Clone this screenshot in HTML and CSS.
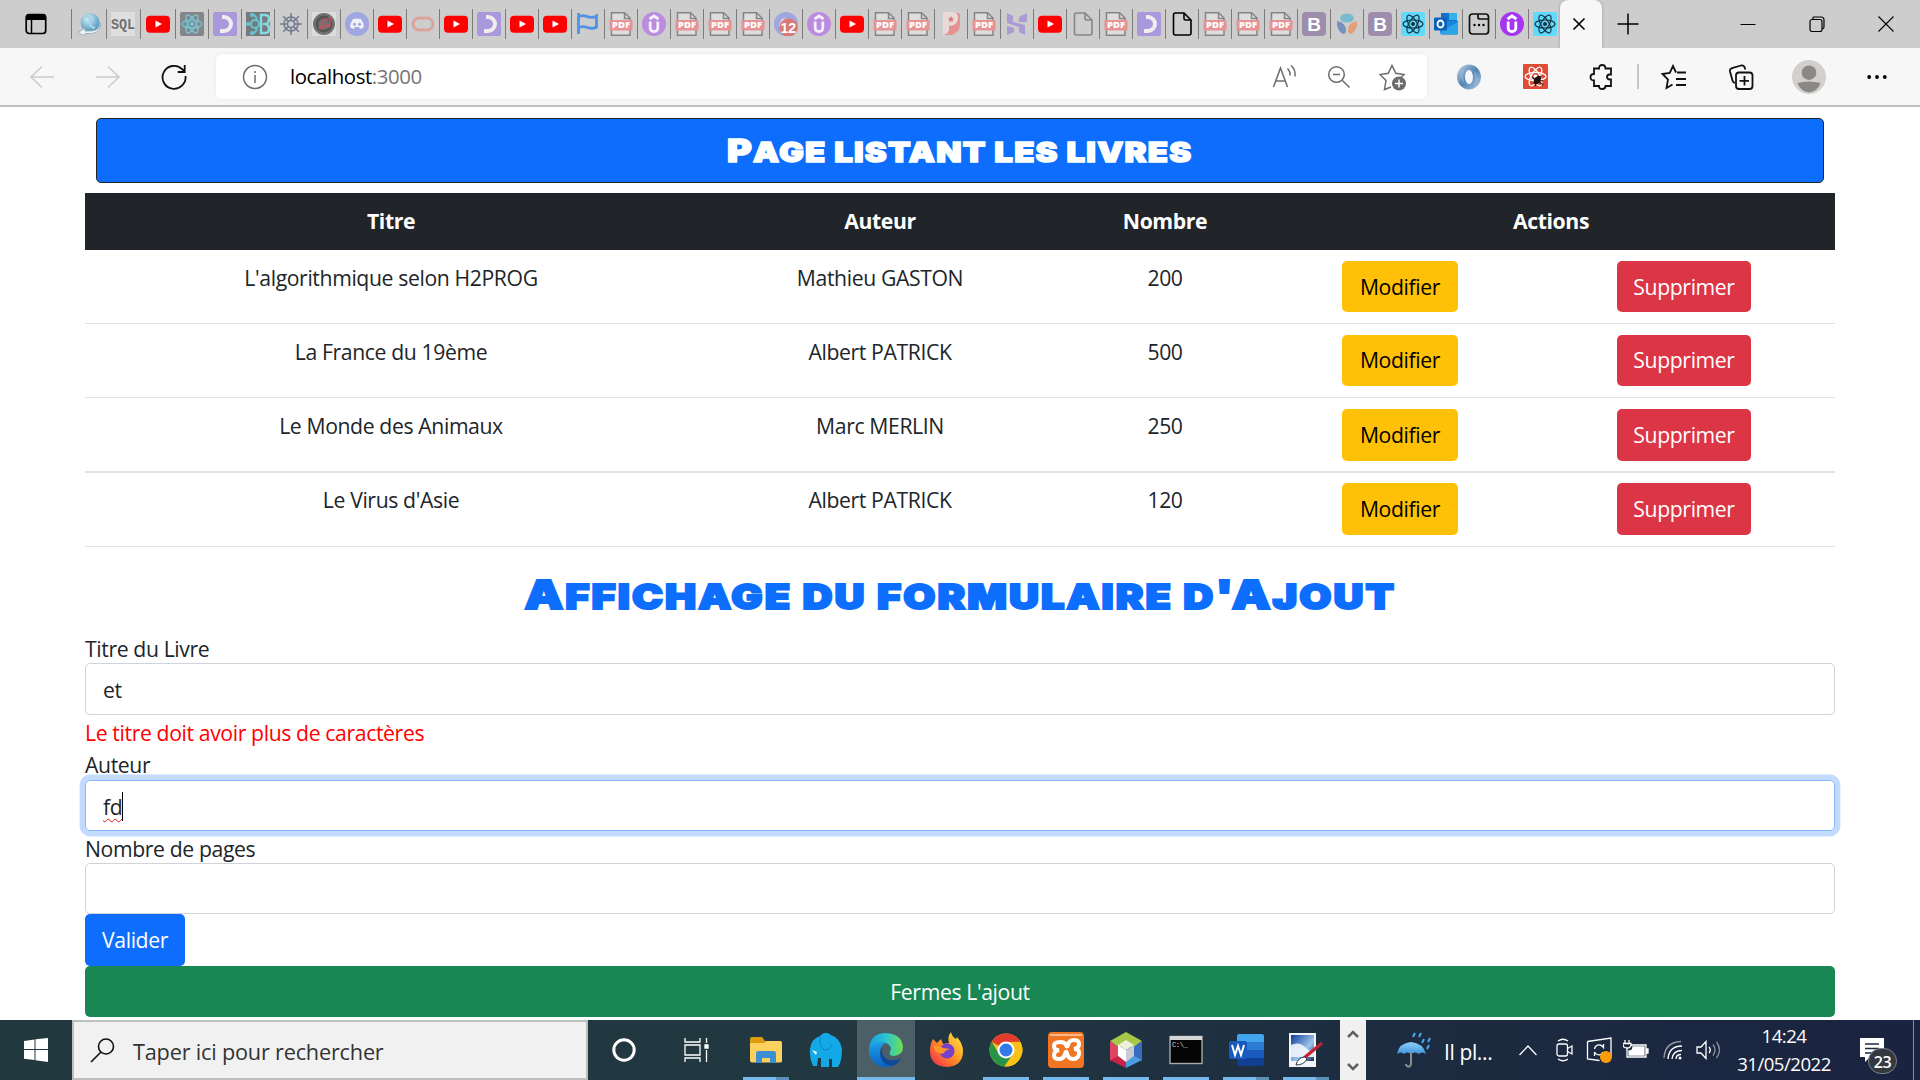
FILE: index.html
```html
<!DOCTYPE html>
<html lang="fr">
<head>
<meta charset="utf-8">
<title>localhost:3000</title>
<link rel="stylesheet" href="styles.css">
</head>
<body>
<svg class="defs" width="0" height="0" aria-hidden="true">
<defs>
<linearGradient id="gEdge" x1="0" y1="0" x2="1" y2="0"><stop offset="0" stop-color="#1b9de2"/><stop offset=".5" stop-color="#2cc4d4"/><stop offset="1" stop-color="#6fe04c"/></linearGradient>
<linearGradient id="gEdge2" x1="0" y1="0" x2="0" y2="1"><stop offset="0" stop-color="#1fa0e6"/><stop offset="1" stop-color="#0b62c4"/></linearGradient>
<linearGradient id="gFox" x1="1" y1="0" x2="0" y2="1"><stop offset="0" stop-color="#fff04a"/><stop offset=".45" stop-color="#ff9a22"/><stop offset="1" stop-color="#f5214f"/></linearGradient>
<linearGradient id="gSky" x1="0" y1="0" x2="1" y2="1"><stop offset="0" stop-color="#0d3f9c"/><stop offset=".6" stop-color="#9fc4ee"/><stop offset="1" stop-color="#1b2e5c"/></linearGradient>
<linearGradient id="gUmb" x1="0" y1="0" x2="0" y2="1"><stop offset="0" stop-color="#8fd0fb"/><stop offset="1" stop-color="#3f94dd"/></linearGradient>
<radialGradient id="gGlobe" cx=".4" cy=".3" r=".7"><stop offset="0" stop-color="#d6eff8"/><stop offset="1" stop-color="#4f94bd"/></radialGradient>
<linearGradient id="gRing" x1="0" y1="0" x2="1" y2="1"><stop offset="0" stop-color="#c3d6e8"/><stop offset=".5" stop-color="#5383b4"/><stop offset="1" stop-color="#b4cbe2"/></linearGradient>
</defs>
<symbol id="atom" viewBox="0 0 24 24"><g fill="none" stroke="currentColor" stroke-width="1.2"><ellipse cx="12" cy="12" rx="10" ry="4"/><ellipse cx="12" cy="12" rx="10" ry="4" transform="rotate(60 12 12)"/><ellipse cx="12" cy="12" rx="10" ry="4" transform="rotate(120 12 12)"/></g><circle cx="12" cy="12" r="2" fill="currentColor"/></symbol>
<symbol id="globe" viewBox="0 0 24 24"><circle cx="13" cy="10.500" r="9.500" fill="url(#gGlobe)"/><path d="M9 4q5 1 4 6t5 6" stroke="#a5d3e6" stroke-width="2.500" fill="none"/><path d="M23.500 11c0 6-5 8-11 8H8v-3l-7 4.500L8 24v-2.500h5c8 0 11-5 10.500-10.500z" fill="#eef3f6" stroke="#8fa8b6" stroke-width=".8"/></symbol>
<symbol id="yt" viewBox="0 0 24 24"><rect x="0" y="3.800" width="24" height="17" rx="4" fill="#f00"/><path d="M9.500 8.500v7l6.500-3.500z" fill="#fff"/></symbol>
<symbol id="react-dim" viewBox="0 0 24 24"><rect width="24" height="24" rx="2" fill="#868686"/><use href="#atom" color="#70cddd"/></symbol>
<symbol id="react" viewBox="0 0 24 24"><rect width="24" height="24" rx="2" fill="#61dafb"/><use href="#atom" color="#143342"/></symbol>
<symbol id="dev" viewBox="0 0 24 24"><rect width="24" height="24" rx="2" fill="#a998db"/><path d="M9 5h2a7 7 0 0 1 0 14H7" fill="none" stroke="#eee" stroke-width="4"/></symbol>
<symbol id="rb" viewBox="0 0 24 24"><rect width="24" height="24" fill="#747b7e"/><path d="M15 3h4q4 0 4 4t-3 5q3 1 3 5t-4 4h-4zM17 12h3" fill="none" stroke="#86d9e5" stroke-width="2.500"/><g fill="none" stroke="#66c5d3" stroke-width="2"><circle cx="9" cy="12" r="4"/><path d="M6 2q6 3 4 6M2 12h4M6 22q6-3 4-6"/></g><circle cx="6" cy="3" r="2" fill="#66c5d3"/><circle cx="2" cy="12" r="2" fill="#66c5d3"/><circle cx="6" cy="21" r="2" fill="#66c5d3"/></symbol>
<symbol id="wheel" viewBox="0 0 24 24"><g fill="none" stroke="#757c91" stroke-width="1.600"><circle cx="12" cy="12" r="7"/><circle cx="12" cy="12" r="3.500"/><path d="M12 1v8M12 15v8M1 12h8M15 12h8M4.200 4.200l5.500 5.500M14.300 14.300l5.500 5.500M19.800 4.200l-5.500 5.500M9.700 14.300l-5.500 5.500"/></g></symbol>
<symbol id="disc" viewBox="0 0 24 24"><rect width="24" height="24" fill="#ddd"/><circle cx="12" cy="12" r="11" fill="#727272"/><circle cx="12" cy="12" r="7" fill="none" stroke="#555" stroke-width="3"/><path d="M11 15V8l7-2v8" fill="none" stroke="#b95560" stroke-width="1.500"/><ellipse cx="9" cy="15.500" rx="2.500" ry="2" fill="#b95560"/><ellipse cx="16" cy="14" rx="2.300" ry="2" fill="#b95560"/></symbol>
<symbol id="discord" viewBox="0 0 24 24"><circle cx="12" cy="12" r="12" fill="#9fa6e0"/><path d="M8 7q4-1 8 0 3 4 3 8-2 2-4 2l-1-2h-4l-1 2q-2 0-4-2 0-4 3-8z" fill="#efeff4"/><circle cx="9.500" cy="12.300" r="1.500" fill="#9fa6e0"/><circle cx="14.500" cy="12.300" r="1.500" fill="#9fa6e0"/></symbol>
<symbol id="oval" viewBox="0 0 24 24"><rect x="2" y="6" width="20" height="12" rx="6" fill="none" stroke="#dba39c" stroke-width="3"/></symbol>
<symbol id="flag" viewBox="0 0 24 24"><path d="M2.500 1v21M2.500 5c6-5 10 4 18-1v11c-7 5-11-4-18 1M20.500 3v5" fill="none" stroke="#4f92e6" stroke-width="2.800"/></symbol>
<symbol id="pdf" viewBox="0 0 24 24"><path d="M2.500.8h13L21 6v17.200H2.500z" fill="#dedede" stroke="#848484" stroke-width="1.500"/><path d="M15.500 1v5.500H21" fill="none" stroke="#848484" stroke-width="1.500"/><rect x=".5" y="8" width="23" height="10.500" rx="1" fill="#e79393"/></symbol>
<symbol id="udemy-dim" viewBox="0 0 24 24"><circle cx="12" cy="12" r="12" fill="#bb8be0"/><path d="M7.500 7l4.500-3 4.500 3M8.200 9.500v6q0 4 3.800 4t3.800-4v-6" fill="none" stroke="#f3eef7" stroke-width="2.800"/></symbol>
<symbol id="udemy" viewBox="0 0 24 24"><circle cx="12" cy="12" r="12" fill="#a435f0"/><path d="M7.500 7l4.500-3 4.500 3M8.200 9.500v6q0 4 3.800 4t3.800-4v-6" fill="none" stroke="#fff" stroke-width="2.800"/></symbol>
<symbol id="pp" viewBox="0 0 24 24"><path d="M4 1h15q2 0 2 3v8q0 9-9 11H4z" fill="#e59292"/><path d="M4 0h8q8 0 7 7t-9 7v3q0 5-6 6z" fill="#ead9d9"/><path d="M12 4l1 2 2 .3-1.500 1.500.4 2.200-1.900-1-2 1 .4-2.200L9 6.300l2-.3z" fill="#df7777"/></symbol>
<symbol id="hh" viewBox="0 0 24 24"><path d="M2 1l6 3v6l12 3v10l-6-3v-5L2 11zM22 1v9h-8V5zM2 23v-9l7 2v4z" fill="#a99bd3"/></symbol>
<symbol id="file" viewBox="0 0 24 24"><path d="M3.500 3q0-2 2-2H14l7 7v13q0 2-2 2H5.500q-2 0-2-2zM14 1v5.500q0 1.500 1.500 1.500H21" fill="none" stroke="currentColor" stroke-width="1.600"/></symbol>
<symbol id="boot" viewBox="0 0 24 24"><rect width="24" height="24" rx="4" fill="#9d8cac"/></symbol>
<symbol id="petals" viewBox="0 0 24 24"><ellipse cx="12" cy="6" rx="7" ry="4.500" fill="#7abccf"/><path d="M2 9q9 2 9 9 0 4-3 4Q1 18 2 9z" fill="#7591bd"/><path d="M22 9q-9 2-9 9 0 4 3 4 7-4 6-13z" fill="#e2a078"/></symbol>
<symbol id="outlook" viewBox="0 0 24 24"><path d="M7 1h16v10H7z" fill="#1172c7"/><path d="M15 1h8v7h-8z" fill="#35b1ea"/><path d="M6 9h18v12q0 1.500-2 1.500H8q-2 0-2-2z" fill="#1a86d9"/><path d="M6 20L24 10v11q0 1.500-2 1.500H7z" fill="#2ca4e8"/><rect y="5.500" width="13" height="13" rx="1" fill="#0a63b8"/><ellipse cx="6.500" cy="12" rx="3" ry="3.500" fill="none" stroke="#fff" stroke-width="1.800"/></symbol>
<symbol id="tabpage" viewBox="0 0 24 24"><path d="M2.500 5q0-3 3-3h13q3 0 3 3v14q0 3-3 3h-13q-3 0-3-3zM11 2v3q0 2 2 2h8" fill="none" stroke="#111" stroke-width="1.700"/><circle cx="7.500" cy="13" r="1.200"/><circle cx="12" cy="13" r="1.200"/><circle cx="16.500" cy="13" r="1.200"/></symbol>
</svg>

<header class="tabstrip">
  <div class="tab-actions"><svg width="24" height="24" viewBox="0 0 24 24"><rect x="2.200" y="2.500" width="19.500" height="19" rx="3" fill="none" stroke="#000" stroke-width="1.700"/><path d="M2 8V5q0-3 3-3h14q3 0 3 3v3z"/><path d="M7.500 7v15" stroke="#000" stroke-width="1.500"/></svg></div>
  <nav class="tabs">
    <i><svg><use href="#globe"/></svg></i>
    <i><svg viewBox="0 0 24 24"><rect width="24" height="24" fill="#dedede"/><text class="t-sql" x="0" y="16.500" textLength="24" lengthAdjust="spacingAndGlyphs">SQL</text></svg></i>
    <i><svg><use href="#yt"/></svg></i>
    <i><svg><use href="#react-dim"/></svg></i>
    <i><svg><use href="#dev"/></svg></i>
    <i><svg><use href="#rb"/></svg></i>
    <i><svg><use href="#wheel"/></svg></i>
    <i><svg><use href="#disc"/></svg></i>
    <i><svg><use href="#discord"/></svg></i>
    <i><svg><use href="#yt"/></svg></i>
    <i><svg><use href="#oval"/></svg></i>
    <i><svg><use href="#yt"/></svg></i>
    <i><svg><use href="#dev"/></svg></i>
    <i><svg><use href="#yt"/></svg></i>
    <i><svg><use href="#yt"/></svg></i>
    <i><svg><use href="#flag"/></svg></i>
    <i><svg><use href="#pdf"/><text class="t-pdf" x="3" y="16.200" textLength="18" lengthAdjust="spacingAndGlyphs">PDF</text></svg></i>
    <i><svg><use href="#udemy-dim"/></svg></i>
    <i><svg><use href="#pdf"/><text class="t-pdf" x="3" y="16.200" textLength="18" lengthAdjust="spacingAndGlyphs">PDF</text></svg></i>
    <i><svg><use href="#pdf"/><text class="t-pdf" x="3" y="16.200" textLength="18" lengthAdjust="spacingAndGlyphs">PDF</text></svg></i>
    <i><svg><use href="#pdf"/><text class="t-pdf" x="3" y="16.200" textLength="18" lengthAdjust="spacingAndGlyphs">PDF</text></svg></i>
    <i><svg><use href="#discord"/><circle cx="14.500" cy="15.500" r="9.300" fill="#d87977"/><text class="t-count" x="6.500" y="21">12</text></svg></i>
    <i><svg><use href="#udemy-dim"/></svg></i>
    <i><svg><use href="#yt"/></svg></i>
    <i><svg><use href="#pdf"/><text class="t-pdf" x="3" y="16.200" textLength="18" lengthAdjust="spacingAndGlyphs">PDF</text></svg></i>
    <i><svg><use href="#pdf"/><text class="t-pdf" x="3" y="16.200" textLength="18" lengthAdjust="spacingAndGlyphs">PDF</text></svg></i>
    <i><svg><use href="#pp"/></svg></i>
    <i><svg><use href="#pdf"/><text class="t-pdf" x="3" y="16.200" textLength="18" lengthAdjust="spacingAndGlyphs">PDF</text></svg></i>
    <i><svg><use href="#hh"/></svg></i>
    <i><svg><use href="#yt"/></svg></i>
    <i class="dim"><svg><use href="#file"/></svg></i>
    <i><svg><use href="#pdf"/><text class="t-pdf" x="3" y="16.200" textLength="18" lengthAdjust="spacingAndGlyphs">PDF</text></svg></i>
    <i><svg><use href="#dev"/></svg></i>
    <i><svg><use href="#file"/></svg></i>
    <i><svg><use href="#pdf"/><text class="t-pdf" x="3" y="16.200" textLength="18" lengthAdjust="spacingAndGlyphs">PDF</text></svg></i>
    <i><svg><use href="#pdf"/><text class="t-pdf" x="3" y="16.200" textLength="18" lengthAdjust="spacingAndGlyphs">PDF</text></svg></i>
    <i><svg><use href="#pdf"/><text class="t-pdf" x="3" y="16.200" textLength="18" lengthAdjust="spacingAndGlyphs">PDF</text></svg></i>
    <i><svg><use href="#boot"/><text class="t-boot" x="5.200" y="18.800">B</text></svg></i>
    <i><svg><use href="#petals"/></svg></i>
    <i><svg><use href="#boot"/><text class="t-boot" x="5.200" y="18.800">B</text></svg></i>
    <i><svg><use href="#react"/></svg></i>
    <i><svg><use href="#outlook"/></svg></i>
    <i><svg><use href="#tabpage"/></svg></i>
    <i><svg><use href="#udemy"/></svg></i>
    <i><svg><use href="#react"/></svg></i>
  </nav>
  <div class="tab-active"><svg width="14" height="14" viewBox="0 0 14 14"><path d="M1.500 1.500l11 11M12.500 1.500l-11 11" stroke="#000" stroke-width="1.600"/></svg></div>
  <div class="tab-new"><svg width="22" height="22" viewBox="0 0 22 22"><path d="M11 .5v21M.5 11h21" stroke="#000" stroke-width="1.500"/></svg></div>
  <div class="win-controls">
    <b><svg width="16" height="16" viewBox="0 0 16 16"><path d="M.5 8.500h15" stroke="#000"/></svg></b>
    <b><svg width="16" height="16" viewBox="0 0 16 16"><rect x="1" y="3.500" width="12" height="12" rx="2" fill="none" stroke="#000" stroke-width="1.200"/><path d="M4 3V2q0-1 1-1h7q3 0 3 3v7q0 1-1.500 2" fill="none" stroke="#000" stroke-width="1.200"/></svg></b>
    <b><svg width="16" height="16" viewBox="0 0 16 16"><path d="M.5.5l15 15M15.500.5l-15 15" stroke="#000" stroke-width="1.100"/></svg></b>
  </div>
</header>

<div class="toolbar">
  <div class="tool faint"><svg width="26" height="24" viewBox="0 0 26 24"><path d="M25 12H2M13 1.500L2 12l11 10.500"/></svg></div>
  <div class="tool faint"><svg width="26" height="24" viewBox="0 0 26 24"><path d="M1 12h23M13 1.500L24 12 13 22.500"/></svg></div>
  <div class="tool"><svg width="26" height="26" viewBox="0 0 26 26"><path d="M24.500 12A11.500 11.500 0 1 1 21 5l2.500 2.500M23.700 1v7h-7"/></svg></div>
  <div class="address">
    <svg class="info" width="26" height="26" viewBox="0 0 26 26"><circle cx="13" cy="13" r="11.500"/><path d="M13 11v8M13 7v2"/></svg>
    <span class="url">localhost<span>:3000</span></span>
    <div class="tool sm"><svg width="26" height="26" viewBox="0 0 26 26"><path d="M1.500 23L8.500 4l7 19M4 17h9M15.500 4.500q3 3 2.500 7M19 1.500q5 4.500 4 11"/></svg></div>
    <div class="tool sm"><svg width="24" height="24" viewBox="0 0 24 24"><circle cx="9.500" cy="9.500" r="7.800"/><path d="M6 9.500h7M15.500 15.500l7 7"/></svg></div>
    <div class="tool sm"><svg width="28" height="28" viewBox="0 0 28 28"><path d="M12 24l-6.500 2.500 1.500-9-6-6 8.300-1.200L13 2.500l3.800 7.800L25 11.500l-3 3"/><circle cx="20" cy="20.500" r="7" fill="#6c6c6c" stroke="none"/><path d="M20 16.500v8M16 20.500h8" stroke="#fff"/></svg></div>
  </div>
  <div class="tool solid"><svg width="26" height="26" viewBox="0 0 26 26"><ellipse cx="13" cy="13" rx="12" ry="12.500" fill="url(#gRing)"/><ellipse cx="13" cy="13" rx="4" ry="7" fill="#f3f6f9"/><path d="M13 .5q-9 5-4 20Q3 14 4 8zM13 25.500q9-5 4-20 6 6.500 5 12z" fill="#9fbbd8" opacity=".5"/></svg></div>
  <div class="tool solid"><svg width="25" height="25" viewBox="0 0 24 24"><rect width="24" height="24" rx="1" fill="#df4b37"/><use href="#atom" color="#fff"/><ellipse cx="14" cy="15.500" rx="2.800" ry="4.500" transform="rotate(35 14 15)" fill="#1c120f"/><path d="M8.500 12.500l11 7.500M10 19l7.500-7.500M12 21v-8M19 16h-7" stroke="#1c120f" stroke-width="1"/></svg></div>
  <div class="tool puzzle"><svg width="26" height="26" viewBox="0 0 26 26"><path d="M5 4.500h5q0-3.500 3.200-3.500t3.300 3.500h5.500v6h-1.500q-2.500.3-2.500 2.500t2.500 2.500H22v6.500h-5.500q0 3-3.300 3T10 22H5v-5.500q-3.500 0-3.500-3.300T5 10z"/></svg></div>
  <div class="tool split"><svg width="26" height="26" viewBox="0 0 26 26"><path d="M15 8.500l-3-6.500-3.300 7L1.500 10 7 15.500l-1.500 8.500 6-3.500M16 8.500h9M15 15h10M15 21h10"/></svg></div>
  <div class="tool"><svg width="26" height="26" viewBox="0 0 26 26"><rect x="8" y="8.500" width="16.500" height="16.500" rx="3"/><path d="M16.500 12v9.500M11.500 16.800h9.500M7 19q-2-.5-2.500-2.500L2 7.500Q1.500 5 4 4.200L13 1.500q2.500-.5 3.500 1.500l.8 2.500"/></svg></div>
  <div class="tool avatar solid"><svg width="34" height="34" viewBox="0 0 34 34"><circle cx="17" cy="17" r="17" fill="#d2d0cd"/><circle cx="17" cy="12.700" r="7.300" fill="#8b8784"/><path d="M5.500 23q11.500-3 23 0-3 8.500-11.500 9.500Q8.500 31.500 5.500 23z" fill="#8b8784"/></svg></div>
  <div class="tool solid"><svg width="20" height="6" viewBox="0 0 20 6"><circle cx="2.200" cy="3" r="1.900"/><circle cx="10" cy="3" r="1.900"/><circle cx="17.800" cy="3" r="1.900"/></svg></div>
</div>

<main class="page">
  <h1 class="banner"><span class="wide"><span class="cap">P</span>age listant les livres</span></h1>
  <table class="books">
    <colgroup><col class="c-title"><col class="c-author"><col class="c-count"><col class="c-edit"><col class="c-delete"></colgroup>
    <thead><tr><th>Titre</th><th>Auteur</th><th>Nombre</th><th colspan="2">Actions</th></tr></thead>
    <tbody>
      <tr><td>L'algorithmique selon H2PROG</td><td>Mathieu GASTON</td><td>200</td><td class="act"><button class="btn warning">Modifier</button></td><td class="act"><button class="btn danger">Supprimer</button></td></tr>
      <tr><td>La France du 19ème</td><td>Albert PATRICK</td><td>500</td><td class="act"><button class="btn warning">Modifier</button></td><td class="act"><button class="btn danger">Supprimer</button></td></tr>
      <tr><td>Le Monde des Animaux</td><td>Marc MERLIN</td><td>250</td><td class="act"><button class="btn warning">Modifier</button></td><td class="act"><button class="btn danger">Supprimer</button></td></tr>
      <tr><td>Le Virus d'Asie</td><td>Albert PATRICK</td><td>120</td><td class="act"><button class="btn warning">Modifier</button></td><td class="act"><button class="btn danger">Supprimer</button></td></tr>
    </tbody>
  </table>
  <h2 class="form-title"><span class="wide"><span class="cap">A</span>ffichage du formulaire d<span class="cap">'A</span>jout</span></h2>
  <form class="book-form">
    <label>Titre du Livre</label>
    <div class="field tall">et</div>
    <p class="error">Le titre doit avoir plus de caractères</p>
    <label>Auteur</label>
    <div class="field focused"><span class="misspelt">fd</span></div>
    <label>Nombre de pages</label>
    <div class="field"></div>
    <button type="button" class="btn primary">Valider</button>
  </form>
  <button class="btn success">Fermes L'ajout</button>
</main>

<footer class="taskbar">
  <div class="start"><svg width="24" height="24" viewBox="0 0 24 24" fill="#fff"><path d="M0 3l10.500-1.500V11H0zM11.500 1.300L24 0v11H11.500zM0 12h10.500v10L0 20.800zM11.500 12H24v12l-12.500-1.700z"/></svg></div>
  <div class="search"><svg width="25" height="25" viewBox="0 0 25 25" fill="none" stroke="#111" stroke-width="1.600"><circle cx="16" cy="8.500" r="7.500"/><path d="M11 14L1 24"/></svg><span>Taper ici pour rechercher</span></div>
  <div class="sys"><svg width="26" height="26" viewBox="0 0 26 26"><circle cx="13" cy="13" r="10.200" fill="none" stroke="#fff" stroke-width="3"/></svg></div>
  <div class="sys"><svg width="26" height="26" viewBox="0 0 26 26" fill="none" stroke="#fff" stroke-width="1.300"><path d="M2 1v4h15V1M2 25v-4h15v4M2 8h15v10H2zM23.500 1v5M23.500 13v12"/><path d="M22 8h3v3h-3z" fill="#fff"/></svg></div>
  <div class="apps">
    <div class="app multi"><svg viewBox="0 0 36 36"><path d="M2 7q0-2 2-2h10l3 4h15q2 0 2 2v3H2z" fill="#dd9c0d"/><path d="M2 11h14l3-2h13q2 0 2 2v18q0 1.500-2 1.500H4q-2 0-2-2z" fill="#fcd15d"/><path d="M8 31V21q0-2 2-2h16q2 0 2 2v10h-6v-5h-8v5z" fill="#3e8fd2"/></svg></div>
    <div class="app"><svg viewBox="0 0 36 36"><path d="M12 4q5-6 11-1 9 3 11 14 0 12-4 18h-6v-8h-3v8h-8v-9h-3l-1 8H5Q1 26 2 17 3 7 12 4z" fill="#13a8e6"/><path d="M13 5q-3 8 3 13 6 0 8-6" fill="none" stroke="#0b86c4" stroke-width="1"/><path d="M4 18l5 2-1 3z" fill="#fff"/></svg></div>
    <div class="app active"><svg viewBox="0 0 36 36"><path d="M1 17Q2 1 18 1q16 1 17 14 0 8-9 9-6 0-4-4 3-6-4-9-9-2-17 6z" fill="url(#gEdge)"/><path d="M1 17Q8 7 17 11q-7 5-4 14t14 8Q13 39 5 29 0 23 1 17z" fill="url(#gEdge2)"/><path d="M15 15q-3 8 4 12 7 3 14-1-3 7-10 8-9-2-10.500-9T15 15z" fill="#114a9b"/></svg></div>
    <div class="app idle"><svg viewBox="0 0 36 36"><path d="M5 7l4 4 4-4 2 5 6-1q-2-6 2-11 1 5 5 7l1-2q6 7 6 14 0 15-16 16Q2 34 2 19 2 12 5 7z" fill="url(#gFox)"/><circle cx="19" cy="19" r="7.500" fill="#7441ce"/><path d="M5 14q7-1 10 2l7 1q-5 1-6 4-3 2-8-1z" fill="#ff9525"/></svg></div>
    <div class="app run"><svg viewBox="0 0 36 36"><circle cx="18" cy="18" r="16.500" fill="#fbc116"/><path d="M18 18L3.700 9.700A16.500 16.500 0 0 1 32.300 9.700L18 10z" fill="#e33b2e"/><path d="M3.700 9.700A16.500 16.500 0 0 0 16.500 34.400L25 22l-14 0z" fill="#269447"/><path d="M18 10h14.300a16.500 16.500 0 0 1-15.800 24.400L25 22z" fill="#fbc116"/><circle cx="18" cy="18" r="8.500" fill="#fff"/><circle cx="18" cy="18" r="6.500" fill="#3279e9"/></svg></div>
    <div class="app run"><svg viewBox="0 0 36 36"><rect y="0" width="36" height="36" rx="4" fill="#f17522"/><path d="M2 3h32" stroke="#fdba8a" stroke-width="2"/><path d="M12 10q-6 0-6 4t5 4q-5 1-5 5t5 4 6-5q1-4 2-1 1 6 6 6t6-5-5-5q5-1 5-5t-5-4q-5 0-6 5-1 3-2 0-1-3-6-3z" fill="none" stroke="#fff" stroke-width="4"/></svg></div>
    <div class="app run"><svg viewBox="0 0 36 36"><path d="M18 0l16 9-8 6-8-5-8 5-8-6z" fill="#a7c746"/><path d="M2 9l8 6v10l-8 4z" fill="#e04566"/><path d="M34 9l-8 6v10l8 4z" fill="#386ac0"/><path d="M2 28l8-4 8 5v7z" fill="#c9234a"/><path d="M34 28l-8-4-8 5v7z" fill="#4d9de1"/><path d="M10 13l8-5 8 5-8 5z" fill="#edf1dc"/><path d="M10 13l8 5v12l-8-6z" fill="#fff"/><path d="M26 13l-8 5v12l8-6z" fill="#c7ccd4"/></svg></div>
    <div class="app run"><svg viewBox="0 0 36 36"><rect x="2" y="4.500" width="32" height="27" fill="#050505" stroke="#aaa" stroke-width="1.400"/><path d="M2 4h32v4H2z" fill="#d6d6d6"/><text x="4" y="15" font-family="Liberation Mono" font-size="7" fill="#ddd">C:\_</text></svg></div>
    <div class="app multi"><svg viewBox="0 0 36 36"><path d="M9 4q0-2 2-2h23q2 0 2 2v7H9z" fill="#42a5ee"/><path d="M9 10h27v8H9z" fill="#2b7cd3"/><path d="M9 18h27v8H9z" fill="#185abd"/><path d="M9 26h27v6q0 2-2 2H11q-2 0-2-2z" fill="#103f91"/><rect x="1" y="9" width="18" height="18" rx="2" fill="#185abd"/><path d="M4 13l3 10 3-9 3 9 3-10" fill="none" stroke="#fff" stroke-width="2"/></svg></div>
    <div class="app multi"><svg viewBox="0 0 36 36"><path d="M1 1h27v34H1z" fill="#f3f4f8"/><path d="M3 3h23v26H3z" fill="url(#gSky)"/><path d="M3 13q8-4 14 2t9 3v7H3z" fill="#f1f6fd" opacity=".9"/><path d="M34 11L16 26" stroke="#c5202d" stroke-width="3"/><path d="M17 25q-7 0-9 8 8 0 11-6z" fill="#fff" stroke="#26324d"/></svg></div>
  </div>
  <div class="band"><svg width="12" height="8" viewBox="0 0 12 8"><path d="M1 7l5-5 5 5"/></svg><svg width="12" height="8" viewBox="0 0 12 8"><path d="M1 1l5 5 5-5"/></svg></div>
  <div class="tray">
    <svg class="t-weather" width="36" height="36" viewBox="0 0 36 36"><path d="M1 22Q3 11 15 10q12 1 15 12-4-3-7 0-4-3-8 0-4-3-7 0-3-3-7 0z" fill="url(#gUmb)"/><path d="M15 20v12q-.5 3-3 2.500-2-.5-2-2.500" fill="none" stroke="#8c8c8c" stroke-width="2"/><path d="M19 1l-2 4M25 1l-2 4M28 7l-2 4M34 6l-2 4M33 13l-2 4" stroke="#48a9ef" stroke-width="2"/></svg>
    <span class="weather">Il pl...</span>
    <svg class="t-more" width="20" height="12" viewBox="0 0 20 12"><path d="M1.500 11L10 2l8.500 9"/></svg>
    <svg class="t-cam" width="20" height="24" viewBox="0 0 20 24"><rect x="2" y="6" width="10.500" height="12" rx="2"/><path d="M12.500 10.500L17 8v8l-4.500-2.500M3 3q5-3.500 10 0M3 21q5 3.500 10 0"/></svg>
    <svg class="t-sync" width="26" height="26" viewBox="0 0 26 26"><path d="M1.500 4.500L25 1v18M1.500 4.500V22l12 1.500M8.500 12q1-4.500 5.500-4 2 .5 3.500 2.500V7M17 15q-2 4-6 2.500-2-1-2.500-2.500v4"/><circle cx="20" cy="20" r="6" fill="#ff9b05" stroke="none"/></svg>
    <svg class="t-bat" width="26" height="20" viewBox="0 0 26 20"><path d="M8 5h15v12H4v-5"/><path d="M10 7h11v8H6v-4q4 0 4-4zM23.500 9h1.500v4h-1.500z" fill="#fff" stroke="#fff"/><path d="M2 0v3M6 0v3M0 3.500h8v1q0 3.500-4 3.500T0 4.500zM4 8v4"/></svg>
    <svg class="t-wifi" width="22" height="22" viewBox="0 0 22 22"><path d="M2 19Q3 3 19 2.500" opacity=".55"/><path d="M6 20Q7 7 20 7M10 20q1-8.500 10-8.500M14 20q0-4.500 5-4.500"/><circle cx="18" cy="19" r="1.500" fill="#fff" stroke="none"/></svg>
    <svg class="t-vol" width="26" height="20" viewBox="0 0 26 20"><path d="M1 7h4l5-5.500v17L5 13H1zM13 7q2.500 3 0 6"/><path d="M17 4.500q4 5.500 0 11M20.500 2q6 8 0 16" opacity=".5"/></svg>
    <div class="clock"><span>14:24</span><span>31/05/2022</span></div>
    <div class="notif"><svg width="24" height="24" viewBox="0 0 24 24"><path d="M0 0h24v19H10l-5 5v-5H0z" fill="#fff"/><path d="M5 6h14M5 10.500h14M5 15h8" stroke="#1b2943" stroke-width="1.500"/></svg><span class="badge">23</span></div>
    <div class="desk"></div>
  </div>
</footer>
</body>
</html>
```
FILE: styles.css
```css
* { box-sizing: border-box; }
body { margin: 0; width: 1920px; height: 1080px; overflow: hidden; display: flex; flex-direction: column; background: #fff; color: #212529; font-family: "Segoe UI", "Open Sans", "Noto Sans", sans-serif; font-size: 21.2px; line-height: 32.4px; letter-spacing: -0.38px; }
svg { display: block; flex: none; }
.defs { position: absolute; }

/* Tab strip */
.tabstrip { height: 48px; flex: none; background: #cdcdcd; display: flex; }
.tab-actions { width: 71px; display: flex; align-items: center; justify-content: center; }
.tabs { width: 1489px; display: flex; align-items: center; }
.tabs i { width: 33px; flex: none; height: 30px; border-left: 1.5px solid #7b7b7b; display: flex; align-items: center; justify-content: center; color: #000; font-style: normal; letter-spacing: 0; }
.tabs i:nth-child(-n+3) { width: 34.5px; }
.tabs i.dim { color: #868686; }
.tabs svg { width: 24px; height: 24px; }
.t-sql { font: 700 14px "Liberation Mono", monospace; fill: #707070; }
.t-pdf { font: 800 8.2px "Open Sans", sans-serif; fill: #fff; }
.t-count { font: 700 14px "Liberation Sans", sans-serif; fill: #fff; }
.t-boot { font: 700 19px "Liberation Sans", sans-serif; fill: #fff; }
.tab-active { width: 42px; background: #f7f7f7; border-radius: 8px 8px 0 0; display: flex; align-items: center; justify-content: center; padding-right: 5px; box-shadow: 0 0 3px #0004; clip-path: inset(0 -4px 0 -4px); }
.tab-new { width: 52px; display: flex; align-items: center; justify-content: center; }
.win-controls { margin-left: auto; display: flex; }
.win-controls b { width: 69px; display: flex; align-items: center; justify-content: center; }

/* Toolbar */
.toolbar { height: 59px; flex: none; background: #f7f7f7; border-bottom: 2px solid #bfbfbf; padding-left: 9px; display: flex; align-items: center; }
.tool { width: 66px; height: 45px; flex: none; display: flex; align-items: center; justify-content: center; }
.tool svg, .info { fill: none; stroke: #111; stroke-width: 1.8; }
.tool.solid svg { stroke: none; fill: #000; }
.tool.faint svg { stroke: #ccc; stroke-width: 1.6; }
.address { width: 1211px; height: 45px; margin: 0 9px; background: #fff; border-radius: 6px; box-shadow: 0 0 4px #0001; display: flex; align-items: center; padding-left: 26px; padding-right: 7px; }
.info, .tool.sm svg { stroke: #6c6c6c; stroke-width: 1.5; }
.url { margin-left: 22px; flex: 1; color: #000; font-size: 20.4px; letter-spacing: -0.4px; }
.url span { color: #757575; }
.tool.sm { width: 54px; }
.puzzle { padding-left: 2px; }
.split { border-left: 2px solid #c6c6c6; height: 25px; margin-left: 3px; width: 71px; }
.avatar { width: 70px; }

/* Page */
.page { height: 913px; flex: none; padding: 11px 85px 0; }
.banner, .form-title { font-family: "Luckiest Guy", Inter, "DejaVu Sans", sans-serif; font-weight: 900; text-transform: uppercase; text-align: center; white-space: nowrap; }
.wide { display: inline-block; transform: scaleX(1.22); }
.banner { margin: 0 11px 10px; height: 65px; line-height: 64px; background: #0d6efd; border: 1.5px solid #212529; border-radius: 5px; color: #fff; font-size: 27px; letter-spacing: 1px; -webkit-text-stroke: 1.4px #fff; }
.banner .cap { font-size: 31px; }
.books { width: 1750px; border-collapse: collapse; table-layout: fixed; text-align: center; }
.c-title { width: 612px; }
.c-author { width: 366px; }
.c-count { width: 204px; }
.c-edit { width: 266px; }
.c-delete { width: 302px; }
.books th { height: 57px; padding: 0; background: #212529; color: #fff; font-weight: 700; }
.books td { height: 74px; padding: 12px 0 0; vertical-align: top; border-bottom: 1px solid #dee2e6; }
.books td.act { padding-top: 11px; }
.books tbody tr:first-child td { height: 73px; }
.books tbody tr:nth-child(3) td { height: 75px; border-bottom-width: 2px; }
.books tbody tr:last-child td { padding-top: 11px; }
.books tbody tr:last-child td.act { padding-top: 10px; }
.btn { height: 51px; border: 0; border-radius: 5px; padding: 1px 0 0; font: inherit; letter-spacing: inherit; color: #fff; display: block; }
.books .btn { margin: 0 auto; }
.books tbody tr:nth-child(n+3) .btn { height: 52px; }
.warning { width: 116px; background: #ffc107; color: #000; }
.danger { width: 134px; background: #dc3545; }
.form-title { margin: 0; height: 84px; line-height: 96px; color: #0d6efd; font-size: 34px; letter-spacing: 1.7px; -webkit-text-stroke: 2px #0d6efd; }
.form-title .cap { font-size: 40px; }
.book-form label, .error { display: block; height: 32.4px; margin: 0; line-height: 35px; }
.field { height: 51px; border: 1px solid #ced4da; border-radius: 5px; padding: 0 17px; line-height: 51px; }
.tall { height: 52px; }
.focused { border-color: #86b7fe; box-shadow: 0 0 0 5.4px #c2dbfe; }
.misspelt { border-right: 1.5px solid #000; text-decoration: underline wavy #e81123 1px; text-underline-offset: 3px; }
.error { color: #f00; }
.primary { width: 100px; height: 52px; background: #0d6efd; }
.success { width: 100%; background: #198754; }

/* Taskbar */
.taskbar { height: 60px; flex: none; display: flex; color: #fff; background: linear-gradient(90deg, #22383f 0%, #223841 45%, #1d2d40 70%, #1a2340 100%); }
.start, .sys { width: 72px; display: flex; align-items: center; justify-content: center; }
.search { width: 516px; border: 2px solid #bfbfbf; background: #f1f1f1; display: flex; align-items: center; gap: 18px; padding-left: 16px; color: #333; font-size: 21.7px; letter-spacing: -0.2px; }
.search span { padding-top: 4px; }
.apps { width: 604px; margin-left: 4px; display: flex; flex: none; }
.app { width: 60px; height: 60px; position: relative; display: flex; align-items: center; justify-content: center; }
.app svg { width: 36px; height: 36px; }
.app.active { background: linear-gradient(#4c5e66, #4c5e66) center / 58px 100% no-repeat; }
.app::after { content: ""; position: absolute; left: 7px; bottom: 0; width: 46px; height: 3px; }
.app.run::after { background: #76b9ed; }
.app.active::after { background: #76b9ed; left: 1px; width: 58px; }
.app.multi::after { background: linear-gradient(90deg, #76b9ed 33px, #5b90b8 33px); }
.band { width: 26px; background: #f0f0f0; display: flex; flex-direction: column; justify-content: space-between; align-items: center; padding: 10px 0 9px; }
.band svg { fill: none; stroke: #606060; stroke-width: 2.5; }
.tray { flex: 1; display: flex; align-items: center; }
.tray > svg { fill: none; stroke: #fff; stroke-width: 1.3; }
.tray > svg.t-weather { margin-left: 30px; stroke: none; }
.weather { width: 74px; margin-left: 12px; font-size: 21px; padding-top: 5px; }
.t-cam { margin-left: 17px; }
.t-sync { margin-left: 11px; }
.t-bat { margin-left: 11px; }
.t-wifi { margin-left: 13px; }
.t-vol { margin-left: 12px; }
.clock { width: 110px; margin-left: 7px; display: flex; flex-direction: column; align-items: center; font-size: 18.6px; line-height: 28px; letter-spacing: -0.5px; }
.notif { position: relative; margin-left: 21px; width: 40px; height: 24px; }
.badge { position: absolute; left: 8px; top: 10px; width: 29px; height: 26px; border-radius: 14px; background: #34393f; border: 1px solid #7b808a; text-align: center; font-size: 16px; font-weight: 600; line-height: 26px; }
.desk { margin-left: auto; width: 7px; height: 60px; border-left: 1px solid #8a909c; }
```
